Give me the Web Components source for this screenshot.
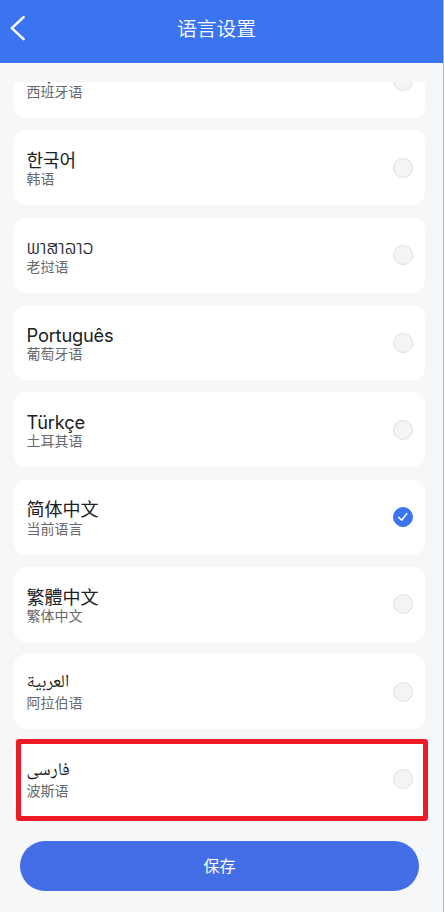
<!DOCTYPE html>
<html lang="zh-CN">
<head>
<meta charset="utf-8">
<title>语言设置</title>
<style>
html,body{margin:0;height:100%;overflow:hidden}
body{font-family:Inter,"Noto Sans CJK SC",sans-serif;background:#f5f7f9}
</style>
</head>
<body>
<language-page></language-page>
<script>
function define(name, html, setup) {
  customElements.define(name, class extends HTMLElement {
    constructor() {
      super();
      this.attachShadow({ mode: 'open' }).innerHTML = html;
    }
    connectedCallback() { if (setup) setup(this, this.shadowRoot); }
  });
}

define('nav-bar', `
<style>
:host{display:grid;grid-template-columns:44px 1fr 44px;align-items:center;height:63px;box-sizing:border-box;padding-bottom:6px;background:#3b74f0;color:#fff;flex:none}
svg{display:block}
h1{margin:1px 0 0;padding-right:11px;font-size:19.8px;font-weight:350;line-height:28px;text-align:center}
</style>
<svg width="44" height="57" viewBox="0 0 44 57" fill="none" stroke="#fff" stroke-width="2.5" stroke-linecap="round" stroke-linejoin="round"><path d="M23.6 17.2 11.8 28.2 23.6 39.2"/></svg>
<h1><slot></slot></h1>`);

define('radio-mark', `
<style>
:host{display:block;width:20px;height:20px;box-sizing:border-box;border:1px solid #dedfe3;border-radius:50%;background:#f4f4f6}
svg{display:none}
:host([checked]){background:#3b74f0;border-color:#3b74f0}
:host([checked]) svg{display:block;margin:-1px}
</style>
<svg width="20" height="20" viewBox="0 0 20 20" fill="none" stroke="#fff" stroke-width="1.5" stroke-linecap="round" stroke-linejoin="round"><path d="M5.8 10.4 8.7 13.3 13.8 6.6"/></svg>`);

define('language-card', `
<style>
:host{display:flex;align-items:center;justify-content:space-between;box-sizing:border-box;height:75px;padding:0 12.5px;border-radius:12px;background:#fff;flex:none}
.text{display:grid;grid-template-rows:23px 17px;justify-items:start;align-self:flex-start;padding-top:17px}
.title{font-size:18px;line-height:24px;height:24px;color:#202124;white-space:nowrap}
.sub{font-size:14px;line-height:17px;height:17px;color:#68696d;white-space:nowrap}
</style>
<div class="text"><div class="title"><slot></slot></div><div class="sub"><slot name="sub"></slot></div></div>
<radio-mark></radio-mark>`, (host, root) => {
  root.querySelector('radio-mark').toggleAttribute('checked', host.hasAttribute('checked'));
});

define('language-list', `
<style>
:host{display:flex;flex-direction:column;justify-content:flex-end;gap:12.3px;height:734.5px;margin:19px 19px 0 14px;overflow:hidden;flex:none}
</style><slot></slot>`);

define('save-button', `
<style>
:host{display:block;margin:24.5px 25px 0 20px}
button{display:block;width:100%;height:50px;border:0;border-radius:25px;background:#446ee5;color:#fff;font:400 16px/50px Inter,"Noto Sans CJK SC",sans-serif;padding:0}
</style><button><slot></slot></button>`);

define('highlight-frame', `
<style>
:host{position:absolute;left:16px;top:739px;width:412px;height:82px;box-sizing:border-box;border:5px solid #ed1c24;border-radius:3px;pointer-events:none}
</style>`);

define('language-page', `
<style>
:host{display:flex;flex-direction:column;position:relative;width:444px;height:912px;background:#f5f7f9;overflow:hidden}
.edge{position:absolute;right:0;top:0;width:1px;height:100%;background:#b4b7bb}
.latin{font-size:18.3px;font-weight:400;letter-spacing:-.2px;vertical-align:-2px}
.sc{vertical-align:-1px}
.ko{font-family:"Noto Sans CJK KR",sans-serif;font-size:18px}
.lao{font-family:"Noto Sans Lao","Noto Sans",sans-serif;font-size:19px;font-weight:300;vertical-align:-1px;-webkit-text-stroke:.2px #202124}
.ar{display:block;margin-top:-1px;font-family:"Noto Naskh Arabic UI","Noto Sans Arabic","DejaVu Sans",sans-serif;font-size:18px}
.tc{font-family:"Noto Sans CJK TC",sans-serif}
</style>
<nav-bar>语言设置</nav-bar>
<language-list>
<language-card><span class="latin">Español</span><span slot="sub">西班牙语</span></language-card>
<language-card><span class="ko" lang="ko">한국어</span><span slot="sub">韩语</span></language-card>
<language-card><span class="lao" lang="lo">ພາສາລາວ</span><span slot="sub">老挝语</span></language-card>
<language-card><span class="latin">Português</span><span slot="sub">葡萄牙语</span></language-card>
<language-card><span class="latin">Türkçe</span><span slot="sub">土耳其语</span></language-card>
<language-card checked><span class="sc">简体中文</span><span slot="sub">当前语言</span></language-card>
<language-card><span class="tc" lang="zh-Hant">繁體中文</span><span slot="sub">繁体中文</span></language-card>
<language-card><span class="ar" lang="ar">العربية</span><span slot="sub">阿拉伯语</span></language-card>
<language-card><span class="ar" lang="fa">فارسی</span><span slot="sub">波斯语</span></language-card>
</language-list>
<save-button>保存</save-button>
<highlight-frame></highlight-frame>
<div class="edge"></div>`);
</script>
</body>
</html>
